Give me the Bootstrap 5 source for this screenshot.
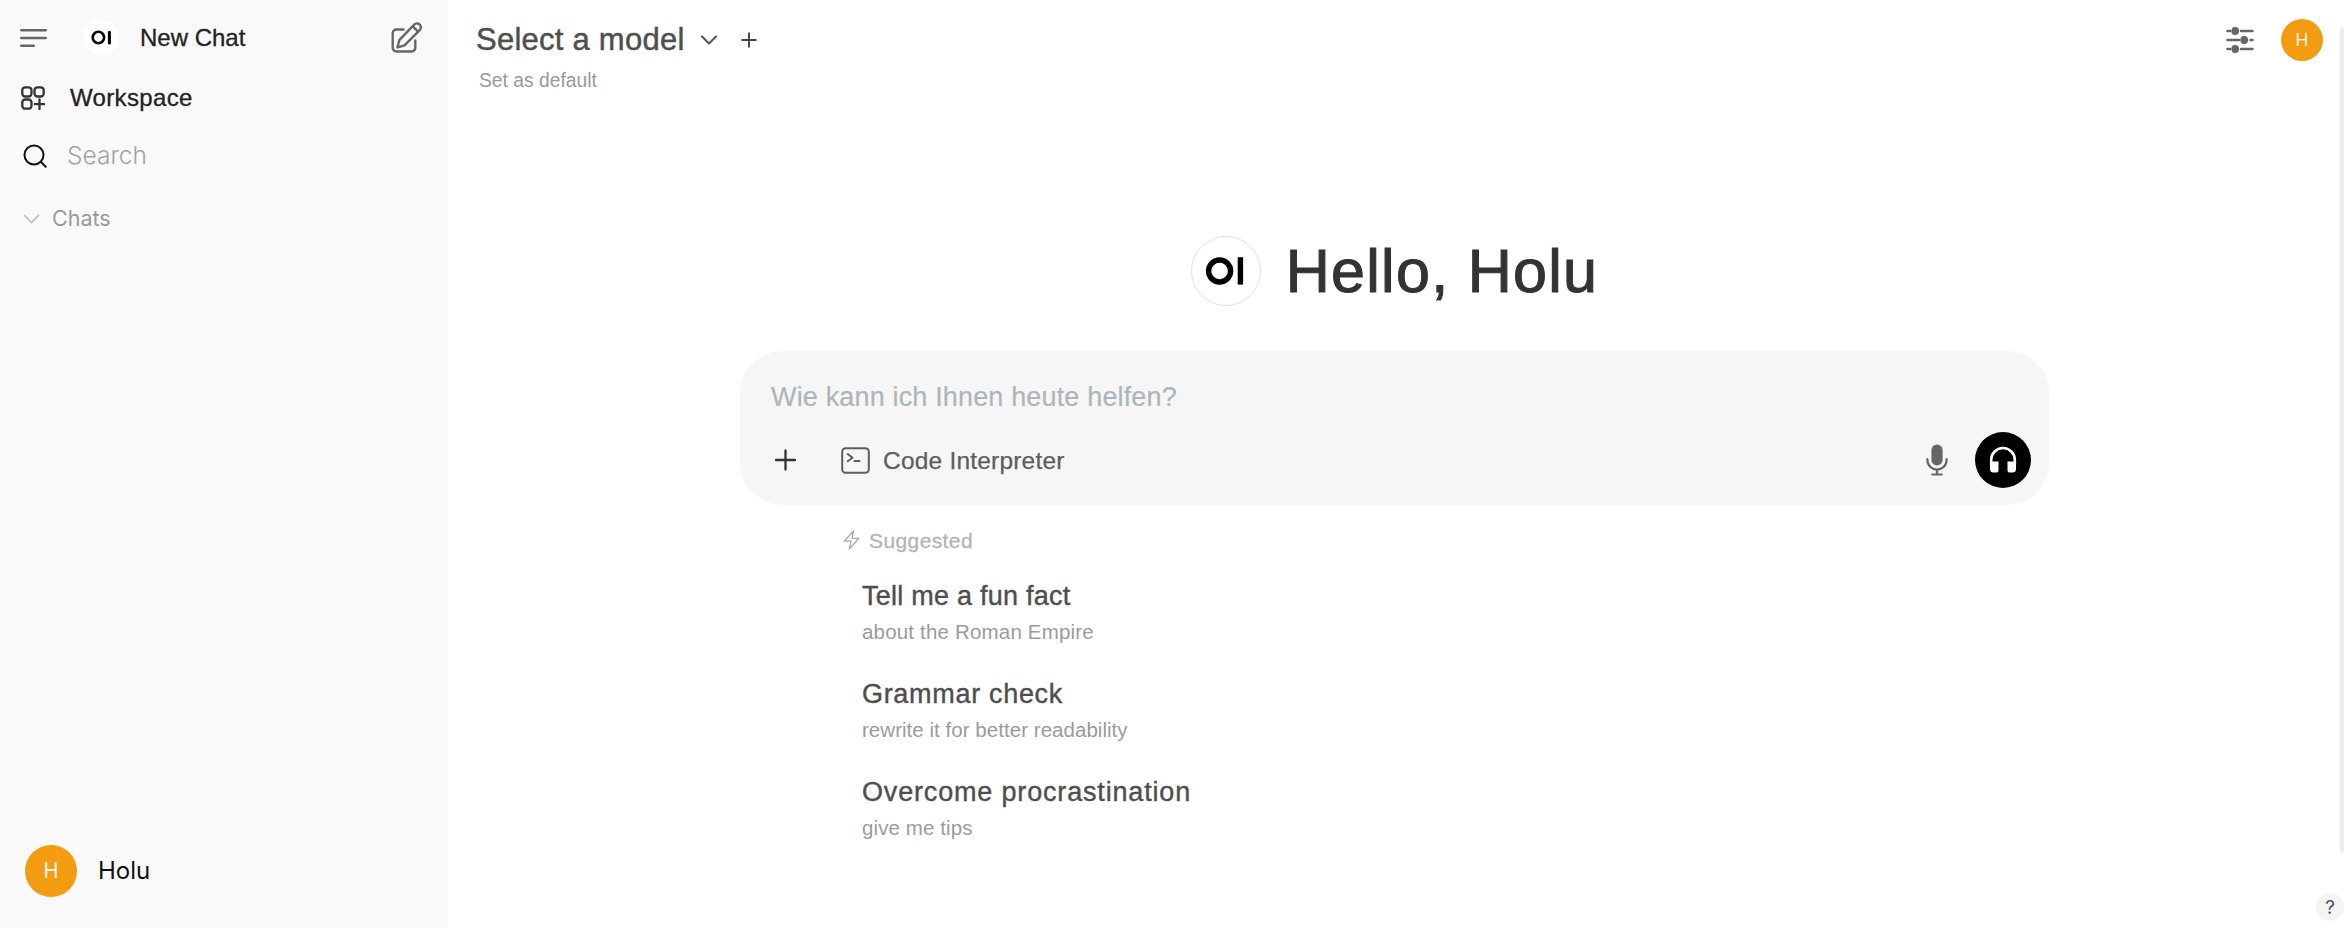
<!DOCTYPE html>
<html lang="de">
<head>
<meta charset="utf-8">
<meta name="viewport" content="width=device-width, initial-scale=1">
<title>Open WebUI</title>
<link href="https://cdn.jsdelivr.net/npm/bootstrap@5.3.0/dist/css/bootstrap.min.css" rel="stylesheet">
<style>
body{font-family:"Liberation Sans",Arial,sans-serif;font-size:24px;line-height:1;color:#333;background:#fff}
svg{display:block;flex:none;fill:none;stroke:currentColor;stroke-linecap:round;stroke-linejoin:round}
.sidebar{width:448px;background:#f9f9f9;color:#222}
.side-row{height:60px}
.medium{-webkit-text-stroke:.3px currentColor}
.inter{font-family:Inter,sans-serif}
.logo-sm{width:35px;height:35px;background:#fff;margin-left:37px;margin-right:21px;color:#000}
.face{background:#f39c12;color:#fff;font-family:"Open Sans",sans-serif}
.face-lg{width:52px;height:52px;font-size:21px;padding-bottom:2px}
.face-sm{width:42px;height:42px;font-size:18px;padding-bottom:1px}
.topbar{padding:0 21px 0 28px;height:79px}
.model{font-size:31px;letter-spacing:.25px;color:#4e4e4e;-webkit-text-stroke:.45px currentColor}
.set-default{font-size:19.3px;color:#999}
.scroll-track{width:4px;top:27px;height:826px;background:#ececec;border-radius:4px}
.hero{height:70px;margin-top:157px;gap:25px;width:1309px}
.logo-lg{width:70px;height:70px;border:1px solid #e0e0e0;color:#000}
.hello{font-size:61px;letter-spacing:1.3px;-webkit-text-stroke:1.1px currentColor}
.stage{width:1309px;margin-left:292px}
.prompt{height:154px;margin-top:45px;border-radius:42px;background:#f6f6f6;padding:28px 18px 17px 31px}
.prompt-text{font-size:27px;line-height:36px;letter-spacing:.16px;color:#adb5bb;-webkit-text-stroke:.2px currentColor}
.tool-row{height:56px;margin-top:17px}
.code{font-size:24.5px;letter-spacing:.2px;color:#5d5d5d;padding-top:2px;-webkit-text-stroke:.25px currentColor}
.voice{width:56px;height:56px;background:#000;color:#fff}
.suggest{padding-left:103px;margin-top:22px;color:#b4b4b4}
.suggest-label{font-size:21px;letter-spacing:.4px;height:26px;-webkit-text-stroke:.3px currentColor}
.idea{padding-left:19px;height:98px}
.idea h2{font-size:27px;line-height:36px;color:#4e4e4e;margin:0;font-weight:400;-webkit-text-stroke:.4px currentColor}
.idea p{font-size:20.5px;line-height:35px;margin:0;color:#9b9b9b}
.help{width:28px;height:28px;right:0;bottom:7px;background:#f4f4f4;color:#555;font-size:19px}
</style>
</head>
<body>
<div class="d-flex vh-100 overflow-hidden position-relative">
  <aside class="sidebar d-flex flex-column flex-shrink-0">
    <div class="side-row d-flex align-items-center medium" style="padding:15px 26px 0 20px">
      <svg color="#666" width="27" height="20" viewBox="0 0 27 20" stroke-width="2.5"><path d="M1.3 2.2H25.7M1.3 10H25.7M1.3 17.7H13.7"/></svg>
      <span class="logo-sm rounded-circle d-flex"><svg width="35" height="35" viewBox="0 0 35 35" stroke-width="2.6"><circle cx="14.4" cy="17.5" r="5.7"/><path d="M25.4 12.3V22.9" stroke-width="3"/></svg></span>
      <span>New Chat</span>
      <svg color="#666" class="ms-auto" width="31" height="31" viewBox="0 0 31 31" stroke-width="2.4"><path d="M12.5 7.5H5.5A3.8 3.8 0 0 0 1.7 11.3V25.7A3.8 3.8 0 0 0 5.5 29.5H20.5A3.8 3.8 0 0 0 24.3 25.7V18.5M6.5 25.3L8.3 18.2 23.2 2.7A3.8 3.8 0 0 1 28.7 8.2L13.5 23.3ZM22.6 5.1L26.8 9.3"/></svg>
    </div>
    <div class="side-row d-flex align-items-center medium" style="padding:15px 0 0 21px;gap:25px;letter-spacing:.35px">
      <svg color="#333" width="24" height="24" viewBox="0 0 24 24" stroke-width="2.3"><rect x="1.3" y="1.3" width="9.2" height="9.2" rx="3"/><rect x="13.5" y="1.3" width="9.2" height="9.2" rx="3"/><rect x="1.3" y="13.5" width="9.2" height="9.2" rx="3"/><path d="M18.5 13.5V23M13.8 18.2H23.2"/></svg>
      <span>Workspace</span>
    </div>
    <div class="inter d-flex align-items-center" style="height:71px;padding:0 0 0 23px;gap:20px">
      <svg color="#111" width="24" height="24" viewBox="0 0 24 24" stroke-width="2"><circle cx="11" cy="11" r="9.5"/><path d="M17.8 17.8L22.7 22.7"/></svg>
      <span style="font-weight:300;font-size:24.5px;color:#a4a4a4">Search</span>
    </div>
    <div class="inter d-flex align-items-center" style="height:56px;padding-left:23px;gap:12px;font-size:21.5px;color:#999">
      <svg color="#c4c4c4" width="17" height="10" viewBox="0 0 17 10" stroke-width="1.8"><path d="M1.5 1.5L8.5 8.5 15.5 1.5"/></svg>
      <span>Chats</span>
    </div>
    <div class="inter mt-auto d-flex align-items-center" style="padding:0 0 31px 25px;gap:21px;color:#111">
      <span class="face face-lg rounded-circle d-flex align-items-center justify-content-center">H</span>
      <span>Holu</span>
    </div>
  </aside>

  <main class="flex-grow-1">
    <header class="topbar d-flex align-items-center">
      <span class="model">Select a model</span>
      <svg color="#555" style="margin-left:14px" width="19" height="12" viewBox="0 0 19 12" stroke-width="2.1"><path d="M3 2.5L10 9.5 17 2.5"/></svg>
      <svg color="#444" style="margin-left:23px" width="16" height="16" viewBox="0 0 16 16" stroke-width="1.9"><path d="M8 1.2V14.8M1.2 8H14.8"/></svg>
      <svg color="#666" class="ms-auto" width="28" height="26" viewBox="0 0 28 26" stroke-width="2.5"><path d="M1.5 4H4M15 4H26.5M1.5 13H13M24.5 13H26.5M1.5 22H4M15 22H26.5"/><g fill="#666" stroke="none"><circle cx="9.2" cy="4" r="3.9"/><circle cx="18.2" cy="13" r="3.9"/><circle cx="9.2" cy="22" r="3.9"/></g></svg>
      <span class="face face-sm rounded-circle d-flex align-items-center justify-content-center" style="margin-left:27px">H</span>
    </header>
    <div class="set-default" style="height:0;padding-left:31px"><span class="d-block" style="transform:translateY(-8px)">Set as default</span></div>

    <div class="stage">
      <div class="hero d-flex align-items-center justify-content-center">
        <span class="logo-lg rounded-circle d-flex align-items-center justify-content-center"><svg width="68" height="68" viewBox="0 0 68 68" stroke-width="5.4"><circle cx="27.6" cy="34" r="11"/><path d="M48.4 20.2V47.6" stroke-linecap="butt" style="stroke-linecap:butt"/></svg></span>
        <span class="hello">Hello, Holu</span>
      </div>

      <section class="prompt">
        <div class="prompt-text">Wie kann ich Ihnen heute helfen?</div>
        <div class="tool-row d-flex align-items-center">
          <svg color="#333" style="margin-left:3px" width="22" height="22" viewBox="0 0 22 22" stroke-width="2.3"><path d="M11.5 1.5V20.5M2 11H21"/></svg>
          <svg color="#5d5d5d" style="margin-left:45px" width="29" height="27" viewBox="0 0 29 27" stroke-width="2"><rect x="1.2" y="1.2" width="26.6" height="24.6" rx="3.5"/><path d="M6.7 7L11.5 10.8 6.7 14.2M13.5 14H18.5"/></svg>
          <span class="code" style="margin-left:13px">Code Interpreter</span>
          <svg color="#666" class="ms-auto" width="22" height="32" viewBox="0 0 22 32" stroke-width="2.2"><rect x="5.4" y=".5" width="11.2" height="21" rx="5.6" fill="#666" style="stroke:none"/><path d="M1.4 15.2V16A9.6 9.6 0 0 0 20.6 16V15.2M11 25.6V30.5M6.3 30.5H15.7"/></svg>
          <span class="voice rounded-circle d-flex align-items-center justify-content-center" style="margin-left:27px"><svg width="28" height="28" viewBox="0 0 28 28" stroke-width="2.6"><path d="M2.2 19V13.8A11.8 11.8 0 0 1 25.8 13.8V19"/><path fill="#fff" style="stroke:none" d="M1 15.5H9.5V24.5A2 2 0 0 1 7.5 26.5H4.5A3.5 3.5 0 0 1 1 23ZM18.5 15.5H27V23A3.5 3.5 0 0 1 23.5 26.5H20.5A2 2 0 0 1 18.5 24.5Z"/></svg></span>
        </div>
      </section>

      <section class="suggest">
        <div class="suggest-label d-flex align-items-center" style="gap:9px">
          <svg color="#aaa" width="17" height="20" viewBox="0 0 17 20" stroke-width="1.3"><path d="M10.5 1L1.2 11.2H8L6.3 19 15.8 8.3H9Z"/></svg>
          <span>Suggested</span>
        </div>
        <div class="idea" style="margin-top:25px"><h2 style="letter-spacing:.25px">Tell me a fun fact</h2><p style="letter-spacing:.18px">about the Roman Empire</p></div>
        <div class="idea"><h2 style="letter-spacing:.69px">Grammar check</h2><p style="letter-spacing:.04px">rewrite it for better readability</p></div>
        <div class="idea"><h2 style="letter-spacing:.83px">Overcome procrastination</h2><p style="letter-spacing:.1px">give me tips</p></div>
      </section>
    </div>
  </main>
  <div class="scroll-track position-absolute end-0"></div>
  <span class="help inter rounded-circle position-absolute d-flex align-items-center justify-content-center">?</span>
</div>
<script src="https://cdn.jsdelivr.net/npm/bootstrap@5.3.0/dist/js/bootstrap.bundle.min.js"></script>
</body>
</html>
